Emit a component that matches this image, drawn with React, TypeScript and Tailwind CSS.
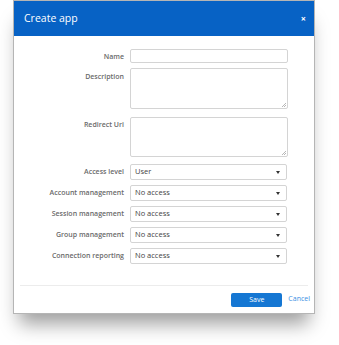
const font = { fontFamily: '"Open Sans", "Noto Sans", sans-serif' };

function Label({ text, pt = "pt-[3px]" }: { text: string; pt?: string }) {
  return (
    <div className={`text-right text-[7px] leading-[9px] font-semibold text-[#6a6a6a] whitespace-nowrap ${pt}`}>{text}</div>
  );
}

function Select({ value }: { value: string }) {
  return (
    <div className="h-[16px] w-[157px] rounded-[2px] border border-[#d4d4d4] bg-white flex items-center justify-between pl-[4px] pr-[6px]">
      <span className="text-[7.5px] text-[#444]">{value}</span>
      <svg width="4" height="3" viewBox="0 0 4 3"><path d="M0 0h4L2 3z" fill="#333" /></svg>
    </div>
  );
}

function Area({ h }: { h: string }) {
  return (
    <div className={`relative w-[158px] ${h} rounded-[2px] border border-[#d4d4d4] bg-white`}>
      <svg className="absolute right-[1px] bottom-[1px]" width="5" height="5" viewBox="0 0 5 5">
        <path d="M1 5L5 1M3 5L5 3" stroke="#999" strokeWidth="0.7" />
      </svg>
    </div>
  );
}

export default function App() {
  const selects = [
    { label: "Access level", value: "User" },
    { label: "Account management", value: "No access" },
    { label: "Session management", value: "No access" },
    { label: "Group management", value: "No access" },
    { label: "Connection reporting", value: "No access" },
  ];

  return (
    <div className="w-[339px] h-[345px] bg-white pl-[13px]" style={font}>
      <div className="w-[302px] border border-[#b5b5b5] bg-white shadow-[0_16px_18px_-6px_rgba(0,0,0,0.38)]">
        {/* Header */}
        <div className="h-[35px] bg-[#0762c5] flex items-center justify-between pl-[10px] pr-[8px]">
          <span className="text-[10.5px] text-white">Create app</span>
          <span className="text-[9px] font-bold text-white leading-none">×</span>
        </div>

        {/* Body */}
        <div className="pt-[13px] pl-[8px] grid grid-cols-[102px_158px] gap-x-[6px]">
          <Label text="Name" />
          <div className="h-[14px] w-[158px] rounded-[2px] border border-[#d4d4d4] bg-white" />

          <div className="col-span-2 h-[5px]" />
          <Label text="Description" pt="pt-[4px]" />
          <Area h="h-[41px]" />

          <div className="col-span-2 h-[8px]" />
          <Label text="Redirect Uri" pt="pt-[3px]" />
          <Area h="h-[40px]" />

          {selects.map((s, i) => (
            <div key={i} className="contents">
              <div className={`col-span-2 ${i === 0 ? "h-[7px]" : "h-[5px]"}`} />
              <Label text={s.label} />
              <Select value={s.value} />
            </div>
          ))}
        </div>

        {/* Footer */}
        <div className="mt-[21px] mx-[6px] border-t border-[#ececec]" />
        <div className="h-[27px] flex items-center justify-end pr-[4px]">
          <button className="h-[14px] w-[51px] rounded-[2px] bg-[#1577d3] text-white text-[7px] leading-none">Save</button>
          <span className="ml-[6px] text-[7px] text-[#3b8fe3]">Cancel</span>
        </div>
      </div>
    </div>
  );
}
